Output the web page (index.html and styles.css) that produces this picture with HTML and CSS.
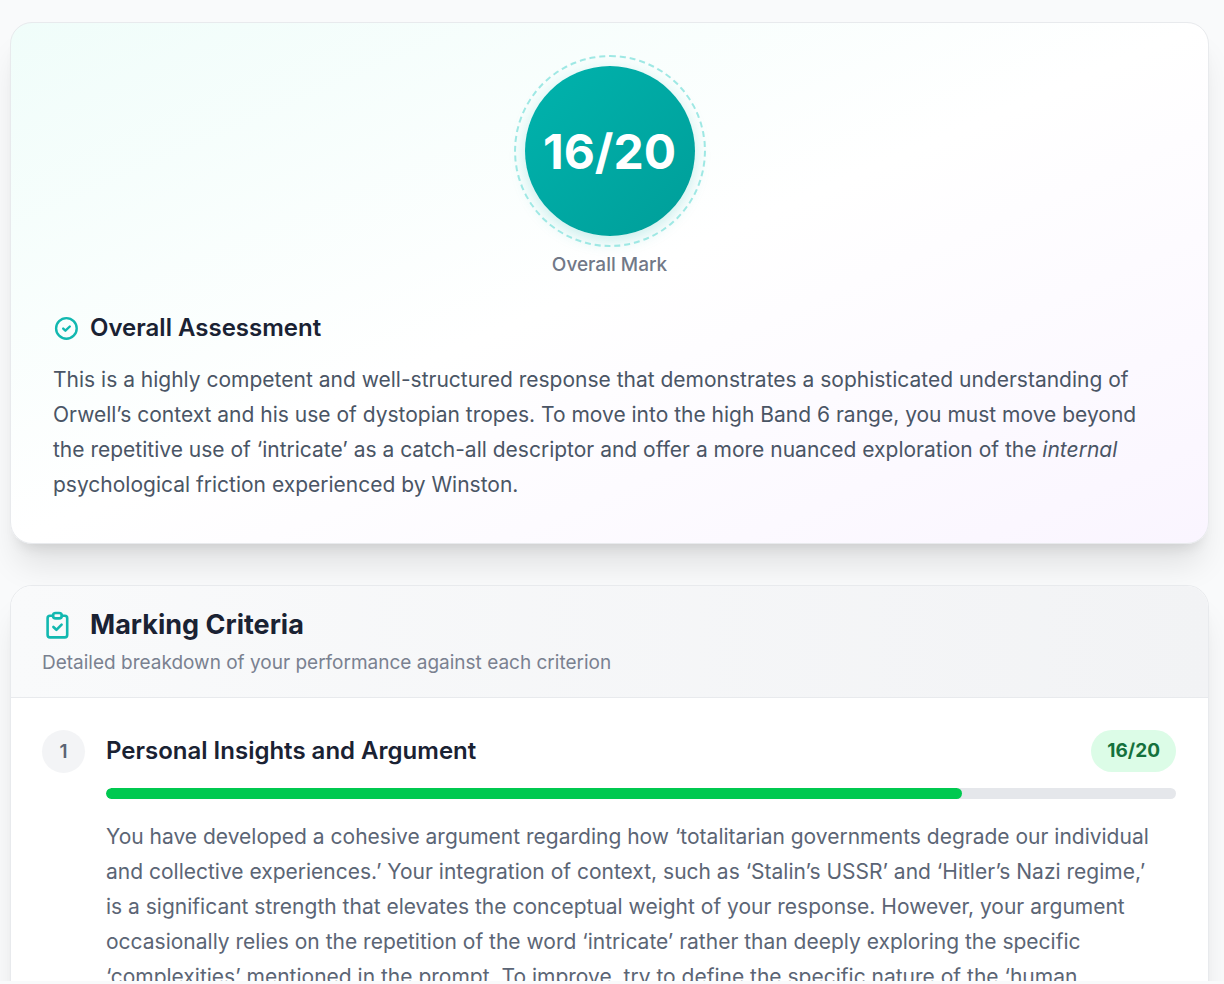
FILE: index.html
```html
<!DOCTYPE html>
<html lang="en">
<head>
<meta charset="utf-8">
<meta name="viewport" content="width=device-width, initial-scale=1">
<title>Assessment feedback</title>
<link rel="stylesheet" href="styles.css">
</head>
<body>
<main class="page">
  <section class="card summary">
    <div class="mark">
      <div class="mark-circle">16/20</div>
      <p class="mark-label">Overall Mark</p>
    </div>
    <div class="assessment">
      <h2 class="heading">
        <svg class="icon" viewBox="0 0 26 26" fill="none" stroke="currentColor" stroke-width="2.4" stroke-linecap="round" stroke-linejoin="round" aria-hidden="true">
          <circle cx="13.4" cy="13.4" r="10.3"/>
          <path d="M10.200 13.600l2.200 2.100 4.400-4.200"/>
        </svg>
        Overall Assessment
      </h2>
      <p class="prose">This is a highly competent and well-structured response that demonstrates a sophisticated understanding of Orwell’s context and his use of dystopian tropes. To move into the high Band 6 range, you must move beyond the repetitive use of ‘intricate’ as a catch-all descriptor and offer a more nuanced exploration of the <em>internal</em> psychological friction experienced by Winston.</p>
    </div>
  </section>

  <section class="card criteria">
    <header class="criteria-header">
      <h2 class="title">
        <svg class="icon-large" viewBox="0 0 32 32" fill="none" stroke="currentColor" stroke-width="2.6" stroke-linecap="round" stroke-linejoin="round" aria-hidden="true">
          <path d="M11 6.800H8a2.400 2.400 0 0 0-2.400 2.400v16.800a2.400 2.400 0 0 0 2.400 2.400h14.800a2.400 2.400 0 0 0 2.400-2.400V9.200A2.400 2.400 0 0 0 22.800 6.800h-3"/>
          <rect x="11" y="4" width="8.800" height="5.400" rx="2.700"/>
          <path d="M11.400 18l3 2.800 5.200-5.200"/>
        </svg>
        Marking Criteria
      </h2>
      <p class="subtitle">Detailed breakdown of your performance against each criterion</p>
    </header>
    <article class="criterion">
      <span class="number">1</span>
      <div class="criterion-body">
        <div class="criterion-top">
          <h3 class="heading" id="c1">Personal Insights and Argument</h3>
          <span class="score">16/20</span>
        </div>
        <div class="bar" role="progressbar" aria-labelledby="c1" aria-valuemin="0" aria-valuemax="20" aria-valuenow="16"><div class="bar-fill" style="width: 80%"></div></div>
        <p class="prose prose-soft">You have developed a cohesive argument regarding how ‘totalitarian governments degrade our individual and collective experiences.’ Your integration of context, such as ‘Stalin’s USSR’ and ‘Hitler’s Nazi regime,’ is a significant strength that elevates the conceptual weight of your response. However, your argument occasionally relies on the repetition of the word ‘intricate’ rather than deeply exploring the specific ‘complexities’ mentioned in the prompt. To improve, try to define the specific nature of the ‘human</p>
      </div>
    </article>
  </section>
</main>
</body>
</html>
```
FILE: styles.css
```css
* { box-sizing: border-box; }

body {
  margin: 0;
  height: 100vh;
  padding-bottom: 3px;
  overflow: hidden;
  background: #f9fafb;
  color: #1a2233;
  font-family: Inter, "Liberation Sans", sans-serif;
}

h2, h3, p { margin: 0; }

.page {
  display: flex;
  flex-direction: column;
  gap: 41px;
  height: 100%;
  padding: 22px 15px 0 10px;
  overflow: hidden;
}

.card {
  flex: none;
  border: 1px solid #e8eaed;
  border-radius: 22px;
  background: #fff;
  box-shadow: 0 27px 33px -7px rgba(0, 0, 0, 0.1), 0 11px 13px -8px rgba(0, 0, 0, 0.1);
}

.summary {
  display: flex;
  flex-direction: column;
  gap: 33px;
  padding: 43px 42px 41px;
  background: linear-gradient(to bottom right, #f0fdfa 0%, #fff 50%, #faf5ff 100%);
}

.mark {
  display: flex;
  flex-direction: column;
  align-items: center;
  gap: 17px;
}

.mark-circle {
  position: relative;
  display: flex;
  align-items: center;
  justify-content: center;
  width: 170px;
  height: 170px;
  border-radius: 50%;
  background: linear-gradient(135deg, #00b3ad, #009e99);
  box-shadow: 0 5px 16px rgba(0, 178, 170, 0.22);
  color: #fff;
  font-size: 48px;
  font-weight: 700;
}

.mark-circle::after {
  content: "";
  position: absolute;
  inset: -11px;
  border: 2px dashed #9ee8e4;
  border-radius: 50%;
}

.mark-label {
  color: #717887;
  font-size: 19px;
  font-weight: 500;
  line-height: 24px;
}

.heading {
  display: flex;
  align-items: center;
  gap: 11px;
  font-size: 24px;
  font-weight: 600;
  line-height: 36px;
}

.icon {
  width: 26px;
  height: 26px;
  color: #12b8b0;
}

.prose {
  color: #4a5565;
  font-size: 21px;
  line-height: 35px;
}

.assessment .prose { margin-top: 16px; }

.criteria-header {
  padding: 21px 31px 20px;
  border-bottom: 1px solid #e8eaed;
  border-radius: 21px 21px 0 0;
  background: linear-gradient(90deg, #f9fafb, #f2f3f5);
}

.title {
  display: flex;
  align-items: center;
  gap: 16px;
  font-size: 27px;
  font-weight: 700;
  line-height: 36px;
}

.icon-large {
  width: 32px;
  height: 32px;
  color: #12b8b0;
}

.subtitle {
  margin-top: 6px;
  color: #7a8190;
  font-size: 19px;
  line-height: 28px;
}

.criterion {
  display: flex;
  gap: 21px;
  padding: 32px 32px 32px 31px;
}

.number {
  display: flex;
  flex: none;
  align-items: center;
  justify-content: center;
  width: 43px;
  height: 43px;
  border-radius: 50%;
  background: #f3f4f6;
  color: #5b6473;
  font-size: 19px;
  font-weight: 600;
}

.criterion-body { flex: 1; }

.criterion-top {
  display: flex;
  align-items: center;
  justify-content: space-between;
}

.score {
  padding: 7px 16px;
  border-radius: 21px;
  background: #dcfce7;
  color: #14713c;
  font-size: 19px;
  font-weight: 700;
  line-height: 28px;
}

.bar {
  height: 11px;
  margin: 16px 0 20px;
  overflow: hidden;
  border-radius: 6px;
  background: #e5e7eb;
}

.bar-fill {
  height: 100%;
  border-radius: 6px;
  background: #00c950;
}

.prose-soft {
  padding-right: 16px;
  color: #5b6575;
}
```
